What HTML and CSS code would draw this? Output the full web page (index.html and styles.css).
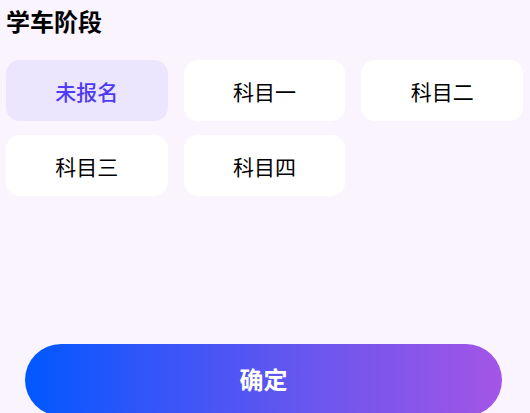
FILE: index.html
```html
<!DOCTYPE html>
<html lang="zh">
<head>
<meta charset="utf-8">
<link rel="stylesheet" href="styles.css">
</head>
<body>
<div class="page">
  <h1 class="title">学车阶段</h1>
  <div class="grid">
    <div class="opt active">未报名</div>
    <div class="opt">科目一</div>
    <div class="opt">科目二</div>
    <div class="opt">科目三</div>
    <div class="opt">科目四</div>
  </div>
  <div class="spacer"></div>
  <div class="footer">
    <button class="confirm">确定</button>
  </div>
</div>
</body>
</html>
```

FILE: styles.css
```css
html, body {
  margin: 0;
  padding: 0;
  background: #f9f4fe;
  height: 100%;
  overflow: hidden;
}
.page {
  font-family: "Noto Sans CJK SC", "Noto Sans", sans-serif;
  height: 413px;
  display: flex;
  flex-direction: column;
  padding: 0 7px 0 6px;
  box-sizing: border-box;
}
.title {
  margin: 4px 0 0 0;
  font-size: 24px;
  font-weight: 700;
  line-height: 34px;
  color: #000;
}
.grid {
  margin-top: 22px;
  display: grid;
  grid-template-columns: repeat(3, 1fr);
  column-gap: 16px;
  row-gap: 14px;
}
.opt {
  height: 61px;
  border-radius: 14px;
  background: #ffffff;
  display: flex;
  align-items: center;
  justify-content: center;
  font-size: 21px;
  color: #000;
}
.opt.active {
  background: #ebe6fd;
  color: #4f3bf6;
  font-weight: 500;
}
.spacer {
  flex: 1;
}
.footer {
  padding: 0 21px 0 19px;
}
.confirm {
  display: block;
  width: 100%;
  height: 72px;
  margin-bottom: -3px;
  border: none;
  border-radius: 36px;
  background: linear-gradient(90deg, #0058ff 0%, #3a55f8 30%, #6a56ee 60%, #a355e6 100%);
  color: #fff;
  font-family: "Noto Sans CJK SC", "Noto Sans", sans-serif;
  font-size: 24px;
  font-weight: 700;
  padding-bottom: 4px;
}
```
